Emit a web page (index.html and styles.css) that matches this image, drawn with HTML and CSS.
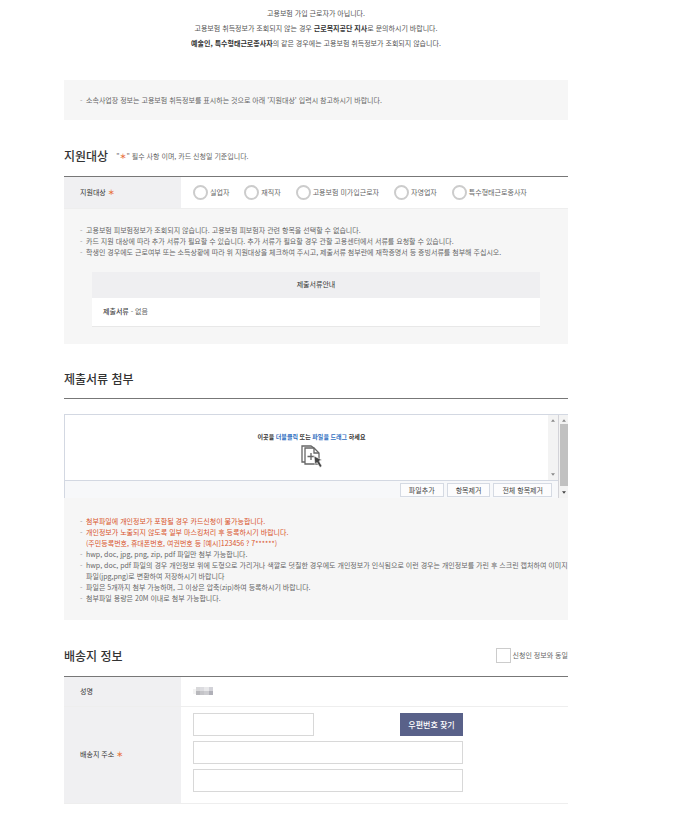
FILE: index.html
```html
<!DOCTYPE html>
<html lang="ko">
<head>
  <meta charset="UTF-8">
  <meta name="viewport" content="width=device-width, initial-scale=1.0">
  <title>카드 신청</title>
  <link rel="stylesheet" href="styles.css">
</head>
<body>

  <main class="container">
    <p class="notice">
      고용보험 가입 근로자가 아닙니다.<br>
      고용보험 취득정보가 조회되지 않는 경우 <strong>근로복지공단 지사</strong>로 문의하시기 바랍니다.<br>
      <strong>예술인, 특수형태근로종사자</strong>의 같은 경우에는 고용보험 취득정보가 조회되지 않습니다.
    </p>

    <div class="info-box info-top">
      <ul class="dash-list">
        <li>소속사업장 정보는 고용보험 취득정보를 표시하는 것으로 아래 '지원대상' 입력시 참고하시기 바랍니다.</li>
      </ul>
    </div>

    <!-- 지원대상 -->
    <section>
      <div class="section-head head-target">
        <h2>지원대상</h2>
        <p class="head-note">"<span class="star">＊</span>" 필수 사항 이며, 카드 신청일 기준입니다.</p>
      </div>
      <div class="form-row target-row">
        <div class="row-label" id="target-label">지원대상 <span class="star">＊</span></div>
        <div class="row-body radios" role="radiogroup" aria-labelledby="target-label">
          <label><input type="radio" name="target"> 실업자</label>
          <label><input type="radio" name="target"> 재직자</label>
          <label><input type="radio" name="target"> 고용보험 미가입근로자</label>
          <label><input type="radio" name="target"> 자영업자</label>
          <label><input type="radio" name="target"> 특수형태근로종사자</label>
        </div>
      </div>
      <div class="info-box info-target">
        <ul class="dash-list">
          <li>고용보험 피보험정보가 조회되지 않습니다. 고용보험 피보험자 관련 항목을 선택할 수 없습니다.</li>
          <li>카드 지원 대상에 따라 추가 서류가 필요할 수 있습니다. 추가 서류가 필요할 경우 관할 고용센터에서 서류를 요청할 수 있습니다.</li>
          <li>학생인 경우에도 근로여부 또는 소득상황에 따라 위 지원대상을 체크하여 주시고, 제출서류 첨부란에 재학증명서 등 증빙서류를 첨부해 주십시오.</li>
        </ul>
        <table class="doc-table">
          <thead>
            <tr><th>제출서류안내</th></tr>
          </thead>
          <tbody>
            <tr><td><b>제출서류</b> - 없음</td></tr>
          </tbody>
        </table>
      </div>
    </section>

    <!-- 제출서류 첨부 -->
    <section>
      <div class="section-head head-files">
        <h2>제출서류 첨부</h2>
      </div>
      <div class="uploader">
        <div class="upload-main">
          <div class="upload-area">
            <div class="drop-zone">
              <p>이곳을 <em>더블클릭</em> 또는 <em>파일을 드래그</em> 하세요</p>
              <svg class="drop-icon" viewBox="0 0 22 23" width="22" height="23" fill="none" stroke="#666" stroke-width="1.3">
                <path d="M4 17H1V1h9l3 2"/>
                <path d="M4 3h9l5 5v11H4z" fill="#fff"/>
                <path d="M13 3v5h5"/>
                <path d="M10 8v7M6.500 11.500h7"/>
                <path d="M13 11l8 4-3 1 3 5-2 1.500-3-5-2 2z" fill="#444" stroke="#fff" stroke-width=".6"/>
              </svg>
            </div>
            <div class="scroll scroll-inner">
              <svg viewBox="0 0 6 4" width="4" height="3"><path d="M0 4l3-4 3 4z" fill="#8a8a8a"/></svg>
              <svg viewBox="0 0 6 4" width="4" height="3"><path d="M0 0l3 4 3-4z" fill="#8a8a8a"/></svg>
            </div>
          </div>
          <div class="upload-actions">
            <button type="button">파일추가</button>
            <button type="button">항목제거</button>
            <button type="button">전체 항목제거</button>
          </div>
        </div>
        <div class="scroll scroll-outer">
          <svg viewBox="0 0 6 4" width="4" height="3"><path d="M0 4l3-4 3 4z" fill="#8a8a8a"/></svg>
          <span class="thumb"></span>
          <svg viewBox="0 0 6 4" width="4" height="3"><path d="M0 0l3 4 3-4z" fill="#444"/></svg>
        </div>
      </div>
      <div class="info-box info-files">
        <ul class="dash-list">
          <li class="warn">첨부파일에 개인정보가 포함될 경우 카드신청이 불가능합니다.</li>
          <li class="warn">개인정보가 노출되지 않도록 일부 마스킹처리 후 등록하시기 바랍니다.<br>(주민등록번호, 휴대폰번호, 여권번호 등 [예시]123456 ? 7******)</li>
          <li>hwp, doc, jpg, png, zip, pdf 파일만 첨부 가능합니다.</li>
          <li class="long">hwp, doc, pdf 파일의 경우 개인정보 위에 도형으로 가리거나 색깔로 덧칠한 경우에도 개인정보가 인식됨으로 이런 경우는 개인정보를 가린 후 스크린 캡처하여 이미지<br>파일(jpg,png)로 변환하여 저장하시기 바랍니다</li>
          <li>파일은 5개까지 첨부 가능하며, 그 이상은 압축(zip)하여 등록하시기 바랍니다.</li>
          <li>첨부파일 용량은 20M 이내로 첨부 가능합니다.</li>
        </ul>
      </div>
    </section>

    <!-- 배송지 정보 -->
    <section>
      <div class="section-head head-address">
        <h2>배송지 정보</h2>
        <label class="same"><input type="checkbox"> 신청인 정보와 동일</label>
      </div>
      <div class="form-row name-row">
        <div class="row-label">성명</div>
        <div class="row-body">
          <!-- 이름 모자이크 -->
          <svg viewBox="0 0 24 10" width="24" height="10">
            <path d="M0 3h3v5H0z" fill="#f3f3f3"/>
            <path d="M3 1h4v4H3z" fill="#d8d8da"/>
            <path d="M3 5h4v4H3z" fill="#b8b8bc"/>
            <path d="M7 1h4v4H7z" fill="#dcdce0"/>
            <path d="M7 5h4v4H7z" fill="#c4c4c8"/>
            <path d="M11 1h5v4h-5z" fill="#e8e8ea"/>
            <path d="M11 5h5v4h-5z" fill="#ccccd0"/>
            <path d="M16 1h4v4h-4z" fill="#d2d2d8"/>
            <path d="M16 5h4v4h-4z" fill="#b0b0b8"/>
          </svg>
        </div>
      </div>
      <div class="form-row address-row">
        <div class="row-label">배송지 주소 <span class="star">＊</span></div>
        <div class="row-body">
          <div class="address">
            <div class="zip-line">
              <input type="text" class="zip" aria-label="우편번호">
              <button type="button" class="zip-btn">우편번호 찾기</button>
            </div>
            <input type="text" aria-label="주소">
            <input type="text" aria-label="상세주소">
          </div>
        </div>
      </div>
    </section>
  </main>

</body>
</html>
```

FILE: styles.css
```css
* {
  box-sizing: border-box;
}
body {
  margin: 0;
  background: #fff;
  color: #666;
  font-family: "Noto Sans CJK KR", sans-serif;
  font-size: 7px;
  line-height: 11px;
}
h2, p, ul {
  margin: 0;
  padding: 0;
}
input, button {
  font-family: inherit;
  font-size: 7px;
  margin: 0;
}
.container {
  padding: 6px 121px 18px 64px;
}
.notice {
  text-align: center;
  line-height: 15px;
  color: #555;
}
.notice strong {
  color: #333;
}
.star {
  color: #e8703a;
  font-weight: bold;
}

/* 안내 박스 */
.info-box {
  background: #f6f6f6;
  padding: 0 16px;
}
.info-top {
  margin-top: 29px;
  padding-top: 15px;
  padding-bottom: 14px;
}
.dash-list {
  list-style: none;
}
.dash-list li {
  position: relative;
  padding-left: 6px;
}
.dash-list li::before {
  content: "-";
  position: absolute;
  left: 0;
  color: #999;
}
.dash-list .warn {
  color: #d9542b;
}
.dash-list .long {
  white-space: nowrap;
}

/* 제목 */
.section-head {
  display: flex;
  align-items: center;
  height: 57px;
  padding-top: 16px;
  border-bottom: 1px solid #777;
}
.section-head h2 {
  font-size: 12px;
  font-weight: 500;
  line-height: 18px;
  color: #333;
  margin-right: 8px;
}
.head-files {
  height: 55px;
  margin-bottom: 15px;
}
.head-address .same {
  margin-left: auto;
}

/* 입력 행 */
.form-row {
  display: flex;
  border-bottom: 1px solid #eee;
}
.row-label {
  display: flex;
  align-items: center;
  gap: 2px;
  width: 117px;
  flex-shrink: 0;
  padding-left: 16px;
  background: #f0f0f2;
  color: #333;
}
.row-body {
  display: flex;
  align-items: center;
  flex: 1;
  padding-left: 12px;
}
.target-row {
  height: 32px;
}
.radios {
  gap: 15px;
}
.radios label, .same {
  display: flex;
  align-items: center;
  gap: 2px;
  white-space: nowrap;
}
.radios input, .same input {
  appearance: none;
  width: 15px;
  height: 15px;
  border: 1px solid #ccc;
  background: #fff;
}
.radios input {
  border-width: 2px;
  border-radius: 50%;
}
.radios input:checked, .same input:checked {
  background: #596189;
}
.info-target {
  padding-top: 16px;
  padding-bottom: 17px;
}
.doc-table {
  width: calc(100% - 24px);
  margin: 14px 12px 0;
  border-collapse: collapse;
  background: #fff;
}
.doc-table th {
  height: 26px;
  padding: 0 0 2px;
  background: #efeff1;
  font-weight: normal;
  color: #333;
}
.doc-table td {
  height: 28px;
  padding: 0 11px;
  border-bottom: 1px solid #e8e8e8;
}
.doc-table b {
  font-weight: 500;
  color: #444;
}

/* 파일 첨부 */
.uploader {
  display: flex;
  height: 84px;
  border: 1px solid #d3d8e2;
  border-width: 1px 0 0 1px;
}
.upload-main {
  display: flex;
  flex-direction: column;
  flex: 1;
}
.upload-area {
  display: flex;
  flex: 1;
  border-bottom: 1px solid #d3d8e2;
}
.drop-zone {
  display: flex;
  flex-direction: column;
  align-items: center;
  flex: 1;
  padding: 16px 0 0 10px;
  font-size: 6px;
  font-weight: bold;
  color: #333;
}
.drop-zone em {
  font-style: normal;
  color: #2d6dc0;
}
.drop-icon {
  margin-top: 3px;
}
.scroll {
  display: flex;
  flex-direction: column;
  align-items: center;
  justify-content: space-between;
  width: 10px;
  padding: 4px 0;
  background: #f3f3f3;
}
.scroll-outer {
  border-left: 1px solid #d3d3d8;
}
.thumb {
  flex: 1;
  width: 8px;
  margin: 2px 0 5px;
  background: #c1c1c1;
}
.upload-actions {
  display: flex;
  justify-content: flex-end;
  gap: 3px;
  padding: 2px 6px 1px;
  background: #f7f8fa;
}
.upload-actions button {
  height: 14px;
  padding: 0 8px;
  border: 1px solid #d5dae3;
  background: #fcfcfd;
  color: #444;
  line-height: 10px;
}
.info-files {
  padding-top: 18px;
  padding-bottom: 16px;
}

/* 배송지 */
.name-row {
  height: 30px;
}
.address-row .row-body {
  padding-top: 6px;
  padding-bottom: 11px;
}
.address {
  display: flex;
  flex-direction: column;
  gap: 5px;
  width: 270px;
}
.address input {
  width: 100%;
  height: 23px;
  padding: 0 5px;
  border: 1px solid #d8d8d8;
}
.zip-line {
  display: flex;
  justify-content: space-between;
}
.zip-line .zip {
  width: 121px;
}
.zip-btn {
  width: 63px;
  padding: 0;
  border: none;
  background: #596189;
  color: #fff;
  font-size: 8px;
  font-weight: 500;
  cursor: pointer;
}
```
